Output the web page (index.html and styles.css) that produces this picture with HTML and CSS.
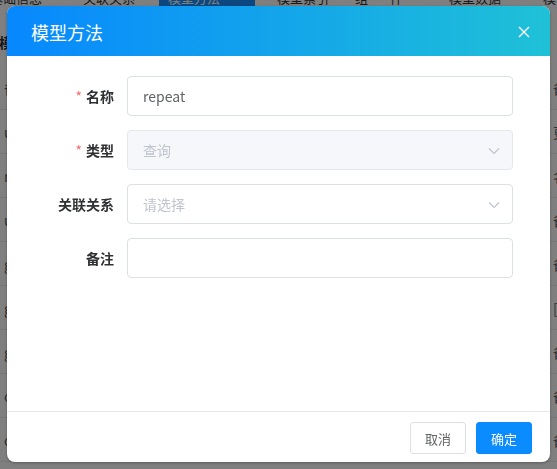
FILE: index.html
```html
<!DOCTYPE html>
<html lang="zh">
<head>
<meta charset="utf-8">
<title>模型方法</title>
<link rel="stylesheet" href="styles.css">
</head>
<body>
<div class="page">
  <div class="tabs">
    <span class="tab t1">基础信息</span>
    <span class="tab t2">关联关系</span>
    <span class="tab t3 active">模型方法</span>
    <span class="tab t4">模型索引</span>
    <span class="tab t5">组</span>
    <span class="tab t5b">件</span>
    <span class="tab t6">模型数据</span>
    <span class="tab t7">模</span>
  </div>
  <div class="section">模型</div>
  <div class="table">
    <div class="row"><span class="cl">备注</span><span class="cr">备注</span></div>
    <div class="row"><span class="cl">update</span><span class="cr">更新</span></div>
    <div class="row"><span class="cl">name</span><span class="cr">名称</span></div>
    <div class="row"><span class="cl">update</span><span class="cr">备注</span></div>
    <div class="row"><span class="cl">get</span><span class="cr">备注</span></div>
    <div class="row"><span class="cl">get</span><span class="cr">[查]</span></div>
    <div class="row"><span class="cl">get</span><span class="cr">备注</span></div>
    <div class="row"><span class="cl">count</span><span class="cr">备注</span></div>
    <div class="row"><span class="cl">count</span><span class="cr">备注</span></div>
  </div>
</div>

<div class="overlay">
  <div class="dialog">
    <div class="dialog-header">
      <span class="dialog-title">模型方法</span>
      <svg class="close" width="12" height="12" viewBox="0 0 12 12"><path d="M1 1L11 11M11 1L1 11" stroke="#fff" stroke-width="1.4" fill="none"/></svg>
    </div>
    <div class="dialog-body">
      <div class="form-row">
        <label class="label"><span class="req">*</span>名称</label>
        <div class="input"><span class="value">repeat</span></div>
      </div>
      <div class="form-row">
        <label class="label"><span class="req">*</span>类型</label>
        <div class="input disabled"><span class="placeholder">查询</span>
          <svg class="arrow" width="12" height="8" viewBox="0 0 12 8"><path d="M1 1.5L6 6.5L11 1.5" stroke="#c0c4cc" stroke-width="1.2" fill="none"/></svg>
        </div>
      </div>
      <div class="form-row">
        <label class="label">关联关系</label>
        <div class="input"><span class="placeholder">请选择</span>
          <svg class="arrow" width="12" height="8" viewBox="0 0 12 8"><path d="M1 1.5L6 6.5L11 1.5" stroke="#c0c4cc" stroke-width="1.2" fill="none"/></svg>
        </div>
      </div>
      <div class="form-row">
        <label class="label">备注</label>
        <div class="input"></div>
      </div>
    </div>
    <div class="dialog-footer">
      <button class="btn">取消</button>
      <button class="btn primary">确定</button>
    </div>
  </div>
</div>
</body>
</html>
```

FILE: styles.css
```css
* { box-sizing: border-box; }
html, body {
  margin: 0;
  padding: 0;
  width: 557px;
  height: 469px;
  overflow: hidden;
  background: #fff;
  font-family: "Noto Sans CJK SC", "Noto Sans", sans-serif;
}
.page {
  width: 557px;
  height: 469px;
  color: #303133;
  font-size: 14px;
}
.tabs {
  height: 6px;
  overflow: hidden;
  display: flex;
  align-items: flex-end;
}
.tab {
  height: 16px;
  line-height: 16px;
  font-size: 13px;
  color: #303133;
  white-space: nowrap;
  flex: none;
}
.t1 { margin-left: -10px; }
.t2 { margin-left: 41px; }
.t3 {
  margin-left: 24px;
  width: 96px;
  padding-left: 9px;
  background: #1890ff;
  color: #fff;
}
.t4 { margin-left: 22px; }
.t5 { margin-left: 26px; }
.t5b { margin-left: 22px; }
.t6 { margin-left: 46px; }
.t7 { margin-left: 42px; }
.section {
  height: 60px;
  padding-top: 26px;
  line-height: 20px;
  font-weight: 700;
  margin-left: -1px;
}
.row {
  height: 44px;
  display: flex;
  justify-content: space-between;
  align-items: center;
  border-bottom: 1px solid #ebeef5;
  color: #606266;
  padding: 0 0 0 4px;
}
.cr { margin-right: -20px; width: 24px; overflow: hidden; white-space: nowrap; }

.overlay {
  position: fixed;
  inset: 0;
  background: rgba(0, 0, 0, 0.5);
  padding: 6px 7px 0 7px;
}
.dialog {
  width: 543px;
  height: 456px;
  background: #fff;
  border-radius: 8px;
  overflow: hidden;
  display: flex;
  flex-direction: column;
  box-shadow: 0 1px 3px rgba(0, 0, 0, 0.3);
}
.dialog-header {
  height: 50px;
  flex: none;
  background: linear-gradient(90deg, #0788fe 0%, #1fc1d7 100%);
  display: flex;
  align-items: center;
  justify-content: space-between;
  padding: 0 20px 0 24px;
}
.dialog-title {
  color: #fff;
  font-size: 18px;
  line-height: 24px;
  margin-top: 2px;
}
.close { display: block; margin-top: 2px; }
.dialog-body {
  flex: 1;
  padding: 20px 37px 0 20px;
  display: flex;
  flex-direction: column;
  gap: 14px;
}
.form-row {
  display: flex;
  align-items: center;
  height: 40px;
}
.label {
  width: 100px;
  flex: none;
  padding-right: 13px;
  text-align: right;
  font-size: 14px;
  font-weight: 700;
  color: #303133;
}
.req {
  color: #f56c6c;
  margin-right: 4px;
  font-weight: 400;
}
.input {
  flex: 1;
  height: 40px;
  border: 1px solid #dcdfe6;
  border-radius: 4px;
  display: flex;
  align-items: center;
  justify-content: space-between;
  padding: 0 12px 0 15px;
  font-size: 14px;
  background: #fff;
}
.input.disabled {
  background: #f5f7fa;
  border-color: #e4e7ed;
}
.value { color: #606266; }
.placeholder { color: #c0c4cc; }
.arrow { display: block; margin-top: 2px; }
.dialog-footer {
  flex: none;
  border-top: 1px solid #e4e7ed;
  display: flex;
  justify-content: flex-end;
  gap: 10px;
  padding: 10px 18px 8px 0;
}
.btn {
  width: 56px;
  height: 32px;
  border: 1px solid #dcdfe6;
  border-radius: 3px;
  background: #fff;
  color: #606266;
  font-family: "Noto Sans CJK SC", "Noto Sans", sans-serif;
  font-size: 13px;
  padding: 0;
}
.btn.primary {
  background: #0a8cff;
  border-color: #0a8cff;
  color: #fff;
}
```
